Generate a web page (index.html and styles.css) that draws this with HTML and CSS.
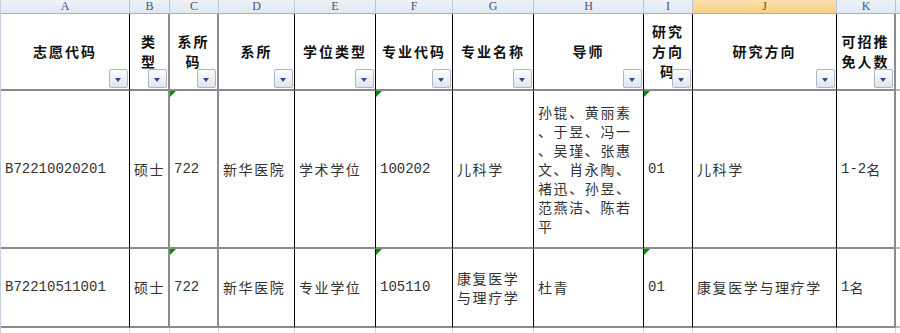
FILE: index.html
```html
<!DOCTYPE html>
<html lang="zh">
<head>
<meta charset="utf-8">
<title>志愿代码</title>
<link rel="stylesheet" href="styles.css">
</head>
<body>
<div class="sheet">
  <div class="col">A</div>
  <div class="col">B</div>
  <div class="col">C</div>
  <div class="col">D</div>
  <div class="col">E</div>
  <div class="col">F</div>
  <div class="col">G</div>
  <div class="col">H</div>
  <div class="col">I</div>
  <div class="col col-active">J</div>
  <div class="col">K</div>
  <div class="col col-last"></div>

  <div class="hd">志愿代码<span class="flt"></span></div>
  <div class="hd g">类<br>型<span class="flt"></span></div>
  <div class="hd g">系所<br>码<span class="flt"></span></div>
  <div class="hd">系所<span class="flt"></span></div>
  <div class="hd">学位类型<span class="flt"></span></div>
  <div class="hd">专业代码<span class="flt"></span></div>
  <div class="hd">专业名称<span class="flt"></span></div>
  <div class="hd">导师<span class="flt"></span></div>
  <div class="hd">研究<br>方向<br>码<span class="flt"></span></div>
  <div class="hd">研究方向<span class="flt"></span></div>
  <div class="hd g">可招推<br>免人数<span class="flt"></span></div>
  <div class="rest r1"></div>

  <div class="td"><span class="n">B72210020201</span></div>
  <div class="td g">硕士</div>
  <div class="td g tx"><span class="n">722</span></div>
  <div class="td">新华医院</div>
  <div class="td">学术学位</div>
  <div class="td tx"><span class="n">100202</span></div>
  <div class="td">儿科学</div>
  <div class="td">孙锟、黄丽素<br>、于昱、冯一<br>、吴瑾、张惠<br>文、肖永陶、<br>褚迅、孙昱、<br>范燕洁、陈若<br>平</div>
  <div class="td tx"><span class="n">01</span></div>
  <div class="td">儿科学</div>
  <div class="td g"><span class="n">1-2</span>名</div>
  <div class="rest r2"></div>

  <div class="td"><span class="n">B72210511001</span></div>
  <div class="td g">硕士</div>
  <div class="td g tx"><span class="n">722</span></div>
  <div class="td">新华医院</div>
  <div class="td">专业学位</div>
  <div class="td tx"><span class="n">105110</span></div>
  <div class="td">康复医学<br>与理疗学</div>
  <div class="td">杜青</div>
  <div class="td tx"><span class="n">01</span></div>
  <div class="td">康复医学与理疗学</div>
  <div class="td g"><span class="n">1</span>名</div>
  <div class="rest r3"></div>

  <div class="fill"></div>
  <div class="fill"></div>
  <div class="fill"></div>
  <div class="fill"></div>
  <div class="fill"></div>
  <div class="fill"></div>
  <div class="fill"></div>
  <div class="fill"></div>
  <div class="fill"></div>
  <div class="fill"></div>
  <div class="fill"></div>
  <div class="fill"></div>
</div>
</body>
</html>
```

FILE: styles.css
```css
* { box-sizing: border-box; }
html, body { margin: 0; padding: 0; background: #fff; }
body {
  width: 900px;
  height: 333px;
  overflow: hidden;
  font-family: "Noto Sans CJK SC", sans-serif;
}
.sheet {
  display: grid;
  grid-template-columns: 129px 40px 49px 76px 81px 77px 81px 110px 49px 144px 59px 1fr;
  grid-template-rows: 14px 77px 158px 79px 20px;
  border-left: 1px solid #c3cfdf;
}
.col {
  background: linear-gradient(#eef2f8, #e1e8f1);
  border-right: 1px solid #b7c7da;
  border-bottom: 1px solid #9fb3cb;
  font-family: "Liberation Serif", serif;
  font-size: 12px;
  line-height: 12px;
  color: #3d5778;
  text-align: center;
}
.col-active {
  background: linear-gradient(#fbe1ad, #f6cf85);
  border-bottom: 1px solid #f0a23c;
  color: #6a4d1e;
}
.col-last { border-right: none; }

.hd, .td {
  position: relative;
  border-right: 1px solid #000;
  border-bottom: 2px solid #8a8a8a;
  overflow: hidden;
}
.hd.g, .td.g { border-right: 2px solid #8c8c8c; }
.hd {
  display: flex;
  align-items: center;
  justify-content: center;
  text-align: center;
  font-size: 14px;
  font-weight: 700;
  letter-spacing: 2px;
  line-height: 20px;
  color: #111;
  padding-bottom: 2px;
}
.td {
  display: flex;
  align-items: center;
  padding-left: 4px;
  font-size: 14px;
  letter-spacing: 1.6px;
  line-height: 19px;
  color: #333;
}
.n {
  font-family: "Liberation Mono", monospace;
  font-size: 14px;
  letter-spacing: 0;
}
.flt {
  position: absolute;
  right: 1px;
  bottom: 1px;
  width: 19px;
  height: 19px;
  border: 1px solid #a9b7ca;
  border-radius: 2px;
  background: linear-gradient(#fcfdfe, #dfe5ee);
}
.flt::after {
  content: "";
  position: absolute;
  left: 5px;
  top: 8px;
  border-top: 4px solid #2d4a93;
  border-left: 3.5px solid transparent;
  border-right: 3.5px solid transparent;
}
.tx::before {
  content: "";
  position: absolute;
  left: 0;
  top: 0;
  border-top: 6px solid #0a8a0a;
  border-right: 6px solid transparent;
}
.rest {
  border-bottom: 1px solid #d9dee6;
}
.r1, .r2, .r3 { border-bottom: 2px solid #b8b8b8; }
.fill {
  border-right: 1px solid #d4d9e2;
}
.fill:last-child { border-right: none; }
```
